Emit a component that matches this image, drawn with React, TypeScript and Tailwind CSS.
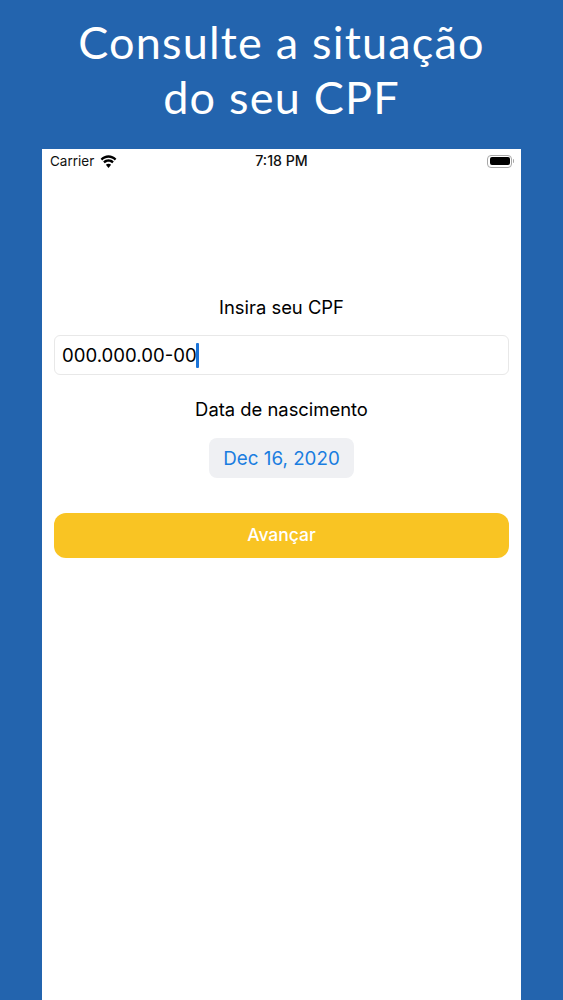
export default function App() {
  return (
    <div className="w-[563px] h-[1000px] overflow-hidden bg-[#2364ae] flex flex-col items-center font-['Inter','Liberation_Sans',sans-serif]">
      <h1 className="pt-[15px] h-[149px] text-center text-white text-[45px] leading-[55px] tracking-[1.2px] font-normal font-['Lato','Open_Sans',sans-serif]">
        Consulte a situação
        <br />
        do seu CPF
      </h1>
      <div className="w-[479px] flex-1 bg-white flex flex-col items-center px-3">
        <div className="relative w-[479px] h-[24px] shrink-0 flex items-center justify-between pl-2 pr-[7px] text-[#111]">
          <div className="flex items-center gap-[6px] text-[13.5px] font-normal">
            <span>Carrier</span>
            <svg width="17" height="13" viewBox="0 0 17 12" fill="#000" preserveAspectRatio="none">
              <path d="M8.5 2.6c2.4 0 4.6.9 6.3 2.5l1.6-1.6C14.3 1.5 11.5.2 8.5.2S2.7 1.5.6 3.5l1.6 1.6c1.7-1.6 3.9-2.5 6.3-2.5z" />
              <path d="M8.5 6.2c1.4 0 2.7.5 3.8 1.5l1.5-1.6c-1.4-1.3-3.3-2.1-5.3-2.1s-3.9.8-5.3 2.1l1.5 1.6c1.1-1 2.4-1.5 3.8-1.5z" />
              <path d="M8.5 8c-1 0-1.9.4-2.6 1.1l2.6 2.8 2.6-2.8C10.4 8.4 9.5 8 8.5 8z" />
            </svg>
          </div>
          <span className="absolute left-1/2 -translate-x-1/2 text-[14.2px] font-medium">7:18 PM</span>
          <div className="flex items-center">
            <div className="w-[25px] h-[13px] rounded-[4px] border border-[#a8a8a8] p-[1.5px]">
              <div className="w-full h-full rounded-[2px] bg-black" />
            </div>
            <div className="w-[1px] h-[4px] bg-[#a8a8a8] ml-[1px] rounded-r" />
          </div>
        </div>
        <p className="mt-[123px] text-[18.4px] leading-[22px] text-black">Insira seu CPF</p>
        <div className="mt-[17px] w-full h-[40px] border border-[#e8e8e8] rounded-[6px] flex items-center pl-[7px] text-[18.6px] text-black">
          <span className="pt-[2px]">000.000.00-00</span>
          <span className="w-[3px] h-[25px] bg-[#1a73d8] rounded-[1px] -ml-[1px]" />
        </div>
        <p className="mt-[24px] -translate-y-[1px] text-[18.4px] leading-[22px] text-black">Data de nascimento</p>
        <div className="mt-[17px] w-[145px] h-[40px] pt-[3px] rounded-[8px] bg-[#eff0f3] flex items-center justify-center text-[#1a7de0] text-[18.8px]">
          Dec 16, 2020
        </div>
        <button className="mt-[35px] w-full h-[45px] rounded-[12px] bg-[#f9c423] text-white text-[17.5px] font-medium">
          Avançar
        </button>
      </div>
    </div>
  );
}
